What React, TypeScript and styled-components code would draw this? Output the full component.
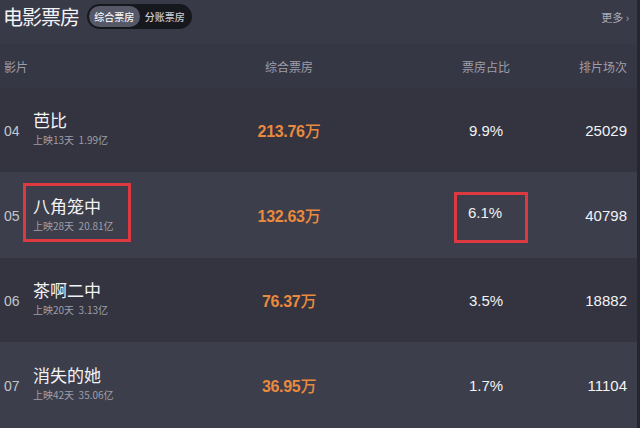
import React, { FC } from "react";
import styled, { createGlobalStyle } from "styled-components";

const colors = {
  header: "#393a48",
  colHead: "#363744",
  rowDark: "#33343f",
  rowLight: "#3d3e4b",
  white: "#f2f2f5",
  gray: "#9d9eaa",
  orange: "#e98a3f",
  red: "#dc3a40",
};

const GlobalStyle = createGlobalStyle`
  html, body {
    margin: 0;
    padding: 0;
    background: ${colors.header};
  }
  body {
    font-family: "Noto Sans CJK SC", "Liberation Sans", sans-serif;
  }
`;

type Movie = {
  rank: string;
  name: string;
  days: string;
  total: string;
  box: string;
  share: string;
  shows: string;
  marked?: boolean;
};

const movies: Movie[] = [
  { rank: "04", name: "芭比", days: "13", total: "1.99亿", box: "213.76", share: "9.9%", shows: "25029" },
  { rank: "05", name: "八角笼中", days: "28", total: "20.81亿", box: "132.63", share: "6.1%", shows: "40798", marked: true },
  { rank: "06", name: "茶啊二中", days: "20", total: "3.13亿", box: "76.37", share: "3.5%", shows: "18882" },
  { rank: "07", name: "消失的她", days: "42", total: "35.06亿", box: "36.95", share: "1.7%", shows: "11104" },
];

const App: FC = () => {
  return (
    <Page>
      <GlobalStyle />
      <TopBar>
        <Title>电影票房</Title>
        <Toggle>
          <ToggleItem active>综合票房</ToggleItem>
          <ToggleItem>分账票房</ToggleItem>
        </Toggle>
        <More>更多 ›</More>
      </TopBar>

      <HeadRow>
        <HeadCell>影片</HeadCell>
        <span />
        <HeadCell align="center">综合票房</HeadCell>
        <span />
        <HeadCell align="center">票房占比</HeadCell>
        <HeadCell align="right">排片场次</HeadCell>
      </HeadRow>

      {movies.map((m, idx) => (
        <Row key={m.rank} light={idx % 2 === 1}>
          <Rank>{m.rank}</Rank>
          <NameBox marked={m.marked}>
            <Name>{m.name}</Name>
            <Sub>
              上映{m.days}天&nbsp;&nbsp;{m.total}
            </Sub>
          </NameBox>
          <BoxOffice>
            {m.box}
            <Wan>万</Wan>
          </BoxOffice>
          <span />
          <ShareCell>
            <ShareBox marked={m.marked}>{m.share}</ShareBox>
          </ShareCell>
          <Shows>{m.shows}</Shows>
        </Row>
      ))}
    </Page>
  );
};

const Page = styled.div`
  width: 637px;
  height: 428px;
  overflow: hidden;
  border-right: 3px solid #25262e;
  background: ${colors.rowDark};
`;

const TopBar = styled.div`
  height: 44px;
  display: flex;
  align-items: flex-start;
  padding: 4px 8px 0 3px;
  box-sizing: border-box;
  background: ${colors.header};
`;

const Title = styled.div`
  font-size: 20px;
  line-height: 26px;
  color: ${colors.white};
  letter-spacing: -1px;
`;

const Toggle = styled.div`
  margin-left: 8px;
  height: 25px;
  width: 105px;
  box-sizing: border-box;
  padding: 2px;
  display: flex;
  align-items: center;
  background: #17181e;
  border-radius: 13px;
`;

const ToggleItem = styled.div<{ active?: boolean }>`
  flex: 1;
  height: 21px;
  display: flex;
  align-items: center;
  justify-content: center;
  font-size: 10px;
  font-weight: 500;
  border-radius: 11px;
  color: ${(p) => (p.active ? "#f4f4f6" : "#c9c9cf")};
  background: ${(p) => (p.active ? "#575867" : "transparent")};
`;

const More = styled.div`
  margin-left: auto;
  margin-top: 5px;
  font-size: 11px;
  color: #a9aab4;
`;

const grid = `
  display: grid;
  grid-template-columns: 33px 205px 102px 95px 102px 1fr;
  align-items: center;
  padding-right: 10px;
`;

const HeadRow = styled.div`
  ${grid};
  height: 44px;
  background: ${colors.colHead};
`;

const HeadCell = styled.div<{ align?: string }>`
  font-size: 12px;
  color: ${colors.gray};
  text-align: ${(p) => p.align || "left"};
  padding-left: ${(p) => (p.align ? "0" : "4px")};
`;

const Row = styled.div<{ light?: boolean }>`
  ${grid};
  height: ${(p) => (p.light ? "86px" : "84px")};
  background: ${(p) => (p.light ? colors.rowLight : colors.rowDark)};
`;

const Rank = styled.div`
  padding-left: 4px;
  font-family: "Liberation Sans", sans-serif;
  font-size: 14px;
  color: #c3c4cc;
  padding-top: 2px;
`;

const NameBox = styled.div<{ marked?: boolean }>`
  justify-self: start;
  display: flex;
  flex-direction: column;
  gap: 2px;
  margin-top: ${(p) => (p.marked ? "-6px" : "-4px")};
  margin-left: ${(p) => (p.marked ? "-10px" : "0")};
  padding: ${(p) => (p.marked ? "9px 14px 6px 7px" : "0")};
  border: ${(p) => (p.marked ? `3px solid ${colors.red}` : "none")};
`;

const Name = styled.div`
  font-size: 17px;
  line-height: 22px;
  color: ${colors.white};
`;

const Sub = styled.div`
  font-size: 10px;
  line-height: 14px;
  color: ${colors.gray};
`;

const BoxOffice = styled.div`
  text-align: center;
  font-family: "Liberation Sans", "Noto Sans CJK SC", sans-serif;
  font-weight: bold;
  font-size: 16px;
  letter-spacing: -0.3px;
  color: ${colors.orange};
`;

const Wan = styled.span`
  font-family: "Noto Sans CJK SC", sans-serif;
  font-weight: 500;
  font-size: 16px;
`;

const ShareCell = styled.div`
  display: flex;
  justify-content: center;
`;

const ShareBox = styled.div<{ marked?: boolean }>`
  font-family: "Liberation Sans", sans-serif;
  font-size: 15px;
  color: ${colors.white};
  box-sizing: border-box;
  ${(p) =>
    p.marked
      ? `
    width: 74px;
    height: 51px;
    margin-top: 4px;
    padding: 9px 0 0 11px;
    border: 3px solid ${colors.red};
    margin-left: 10px;
  `
      : ""}
`;

const Shows = styled.div`
  text-align: right;
  font-family: "Liberation Sans", sans-serif;
  font-size: 15px;
  color: ${colors.white};
`;

export default App;
